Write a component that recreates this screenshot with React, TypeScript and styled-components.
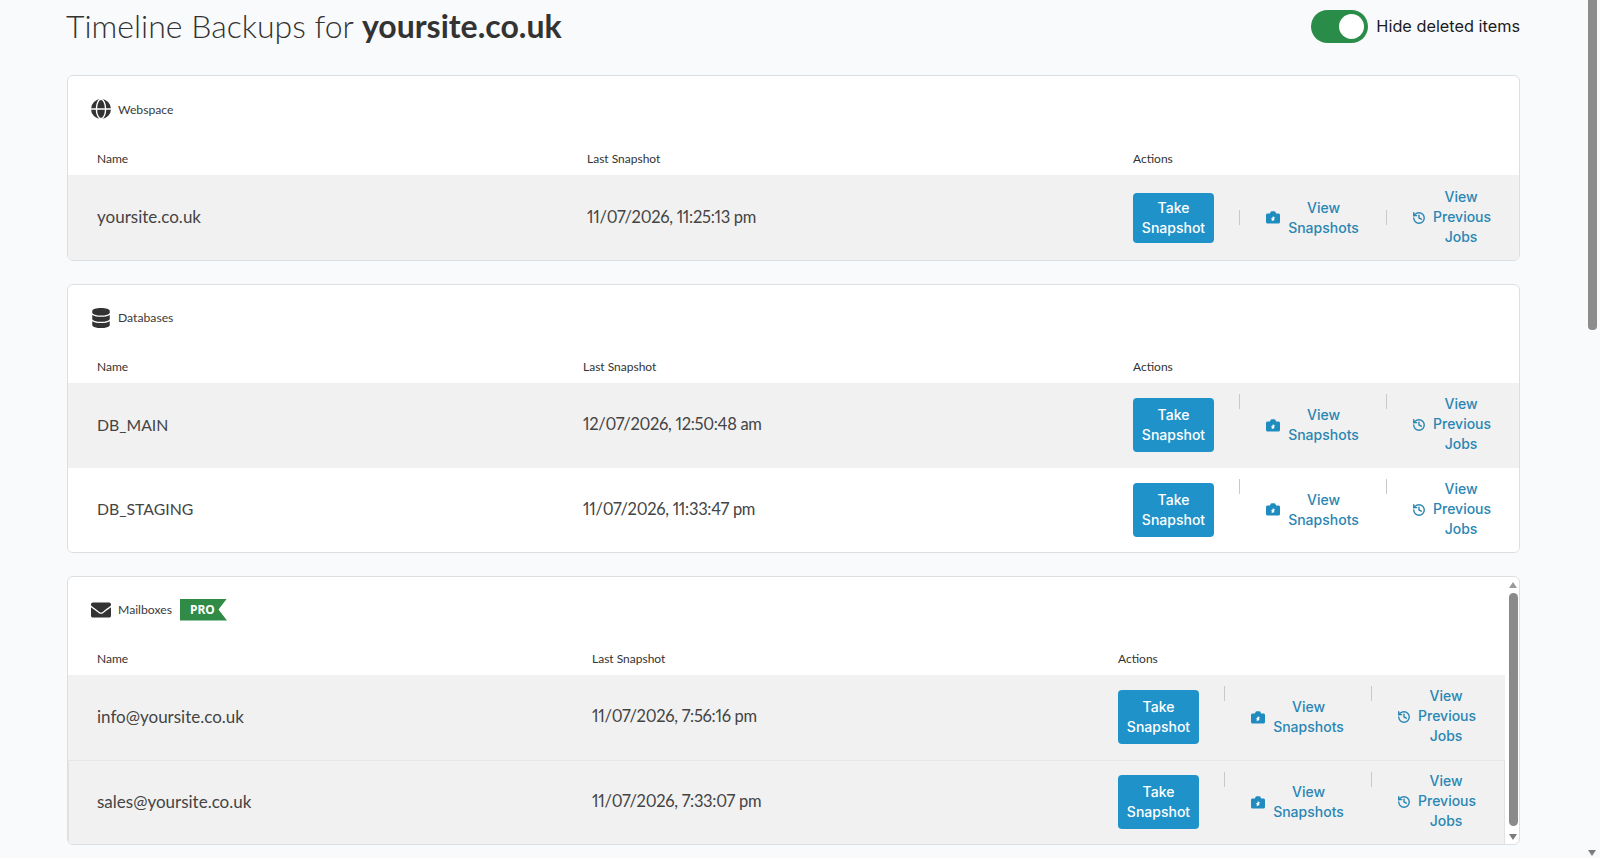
import React from 'react';
import styled, {createGlobalStyle} from 'styled-components';
import {History} from 'lucide-react';
import {FaDatabase, FaEnvelope} from 'react-icons/fa';

const GlobalStyle = createGlobalStyle`
  html, body {
    margin: 0;
    padding: 0;
    background: #f9fafc;
  }
`;

const Page = styled.div`
  display: flex;
  width: 1600px;
  height: 858px;
  overflow: hidden;
  background: #f9fafc;
  color: #333;
  font-family: Lato, "Noto Sans", sans-serif;
  box-sizing: border-box;
`;

const Content = styled.main`
  flex: 1;
  min-width: 0;
  padding: 0 68px 0 67px;
`;

const TopBar = styled.header`
  display: flex;
  justify-content: space-between;
  align-items: center;
  height: 52px;
  margin-bottom: 23px;
`;

const Title = styled.h1`
  margin: -2px 0 0 -1px;
  font-size: 32px;
  font-weight: 300;
  color: #333;

  b {
    font-weight: 700;
  }
`;

const ToggleWrap = styled.label`
  display: flex;
  align-items: center;
  gap: 8px;
  font-family: Inter, sans-serif;
  font-size: 16.3px;
  color: #1c1c1c;
`;

const Toggle = styled.span`
  display: flex;
  justify-content: flex-end;
  align-items: center;
  width: 57px;
  height: 33px;
  padding: 4px;
  border-radius: 17px;
  background: #2a8c49;
  box-sizing: border-box;

  &::after {
    content: "";
    width: 25px;
    height: 25px;
    border-radius: 50%;
    background: #fff;
  }
`;

const Card = styled.section`
  display: flex;
  margin-bottom: 23px;
  background: #fff;
  border: 1px solid #dcdfe2;
  border-radius: 6px;
  overflow: hidden;
  box-sizing: border-box;
`;

const CardMain = styled.div`
  flex: 1;
  min-width: 0;
`;

const CardTitle = styled.div<{$tall: boolean}>`
  display: flex;
  align-items: center;
  gap: 7px;
  height: ${(p) => (p.$tall ? `65px` : `66px`)};
  padding-left: 23px;
  font-size: 12.2px;
  color: #3a3a3a;

  svg {
    flex: none;
    width: 20px;
    height: 20px;
    color: #333;
  }
`;

const ProBadge = styled.span`
  display: flex;
  align-items: center;
  width: 47px;
  height: 22px;
  margin-left: 1px;
  padding-left: 10px;
  box-sizing: border-box;
  background: #2f8b45;
  color: #fff;
  font-family: "Noto Sans", sans-serif;
  font-size: 12px;
  font-weight: 700;
  clip-path: polygon(0 0, 100% 0, 82% 50%, 100% 100%, 0 100%);
`;

const Columns = styled.div<{$name: number; $last: number}>`
  display: grid;
  grid-template-columns: ${(p) => p.$name}px ${(p) => p.$last}px 1fr;
  align-items: center;
  padding-left: 29px;
`;

const HeadRow = styled(Columns)`
  height: 33px;
  font-size: 12px;
  color: #333;
`;

const Row = styled(Columns)<{$shaded: boolean; $divided?: boolean; $tall: boolean}>`
  height: ${(p) => (p.$tall ? `84.5px` : `85px`)};
  background: ${(p) => (p.$shaded ? `#f1f1f1` : `#fff`)};
  border-top: ${(p) => (p.$divided ? `1px solid #e6e6e6` : `none`)};
  box-shadow: ${(p) => (p.$divided ? `inset 1px 0 #e2e2e2, inset -1px 0 #e2e2e2` : `none`)};
  box-sizing: border-box;
  font-size: 17px;
  color: #444;
`;

const NameCell = styled.div<{$caps: boolean}>`
  padding-bottom: 2px;
  font-size: ${(p) => (p.$caps ? `15.8px` : `17px`)};
`;

const DateCell = styled.div`
  padding-bottom: 2px;
  font-size: 16.5px;
  font-variant-numeric: proportional-nums;
  letter-spacing: -0.3px;
`;

const Actions = styled.div`
  display: flex;
  align-items: center;
  height: 100%;
`;

const SnapshotButton = styled.button<{$tall: boolean}>`
  flex: none;
  width: 81px;
  height: ${(p) => (p.$tall ? `54px` : `50px`)};
  padding: 0;
  border: none;
  border-radius: 4px;
  background: #1f93c9;
  color: #fff;
  font-family: Inter, sans-serif;
  font-size: 14px;
  font-weight: 500;
  line-height: 20px;
`;

const Divider = styled.span<{$top: boolean}>`
  flex: none;
  width: 1px;
  height: 15px;
  background: #c9c9c9;
  align-self: ${(p) => (p.$top ? `flex-start` : `center`)};
  margin-top: ${(p) => (p.$top ? `11px` : `0`)};
`;

const ActionLink = styled.a<{$width: number; $gap: number}>`
  display: flex;
  flex: none;
  align-items: center;
  gap: ${(p) => p.$gap}px;
  color: #2a86b3;
  font-family: Inter, sans-serif;
  font-size: 14px;
  font-weight: 500;
  line-height: 20px;
  text-align: center;

  span {
    width: ${(p) => p.$width}px;
  }

  svg {
    flex: none;
  }
`;

const SnapshotsLink = styled(ActionLink)`
  margin: 0 27px 0 26px;
`;

const JobsLink = styled(ActionLink)`
  margin-left: 25px;

  span {
    padding-bottom: 2px;
  }
`;

const FirstGap = styled.span`
  flex: none;
  width: 25px;
`;

const PageScrollbar = styled.div`
  display: flex;
  flex: none;
  flex-direction: column;
  justify-content: space-between;
  width: 9px;
  height: 858px;
  margin-right: 3px;
  padding-bottom: 2px;
  box-sizing: border-box;
`;

const PageThumb = styled.div`
  height: 330px;
  border-radius: 0 0 4px 4px;
  background: #8c8c8c;
`;

const Arrow = styled.div<{$up?: boolean}>`
  flex: none;
  width: 0;
  height: 0;
  border-left: 4.5px solid transparent;
  border-right: 4.5px solid transparent;
  border-top: ${(p) => (p.$up ? `none` : `6px solid #7c7c7c`)};
  border-bottom: ${(p) => (p.$up ? `6px solid #9a9a9a` : `none`)};
`;

const InnerScrollbar = styled.div`
  display: flex;
  flex: none;
  flex-direction: column;
  width: 9px;
  margin: 0 1px 0 4px;
  padding-top: 5px;
  box-sizing: border-box;
`;

const InnerThumb = styled.div`
  height: 233px;
  margin: 5px 0 8px;
  border-radius: 5px;
  background: #8a8a8a;
`;

const GlobeIcon = () => (
  <svg viewBox="0 0 20 20">
    <circle cx="10" cy="10" r="10" fill="currentColor" />
    <ellipse cx="10" cy="10" rx="4.6" ry="9.6" fill="none" stroke="#fff" strokeWidth="1.4" />
    <path d="M0 10h20" stroke="#fff" strokeWidth="1.4" />
  </svg>
);

const CameraIcon = () => (
  <svg width="14" height="13" viewBox="0 0 14 13">
    <path
      d="M1.5 2.5h2.4L4.7.8C4.9.4 5.2.2 5.6.2h2.8c.4 0 .7.2.9.6l.8 1.7h2.4c.8 0 1.5.7 1.5 1.5v7c0 .8-.7 1.5-1.5 1.5h-11C.7 12.500 0 11.800 0 11V4c0-.8.7-1.500 1.500-1.500z"
      fill="#1f8cc0"
    />
    <path d="M7 4.800l.7 1.500 1.600.2-1.200 1.100.3 1.600L7 9.400l-1.400.8.3-1.600-1.200-1.100 1.600-.2z" fill="#fff" />
  </svg>
);

interface Item {
  name: string,
  date: string
}

interface GroupProps {
  title: string,
  icon: React.ReactNode,
  pro?: boolean,
  nameWidth: number,
  lastWidth: number,
  items: Item[],
  tall: boolean,
  caps?: boolean,
  stripeAll?: boolean,
  scroll?: boolean
}

const Group: React.FunctionComponent<GroupProps> = (props: GroupProps) => {
  const {title, icon, pro, nameWidth, lastWidth, items, tall, caps, stripeAll, scroll} = props;

  return (
    <Card>
      <CardMain>
        <CardTitle $tall={tall}>
          {icon}
          {title}
          {pro && <ProBadge>PRO</ProBadge>}
        </CardTitle>
        <HeadRow $name={nameWidth} $last={lastWidth}>
          <div>Name</div>
          <div>Last Snapshot</div>
          <div>Actions</div>
        </HeadRow>
        {items.map((item, i) => (
          <Row
            key={item.name}
            $name={nameWidth}
            $last={lastWidth}
            $tall={tall}
            $shaded={stripeAll || i === 0}
            $divided={stripeAll && i > 0}
          >
            <NameCell $caps={!!caps}>{item.name}</NameCell>
            <DateCell>{item.date}</DateCell>
            <Actions>
              <SnapshotButton $tall={tall}>Take Snapshot</SnapshotButton>
              <FirstGap />
              <Divider $top={tall} />
              <SnapshotsLink $width={71} $gap={8}>
                <CameraIcon />
                <span>View Snapshots</span>
              </SnapshotsLink>
              <Divider $top={tall} />
              <JobsLink $width={56} $gap={7}>
                <History size={14} strokeWidth={2.4} />
                <span>View Previous Jobs</span>
              </JobsLink>
            </Actions>
          </Row>
        ))}
      </CardMain>
      {scroll && (
        <InnerScrollbar>
          <Arrow $up />
          <InnerThumb />
          <Arrow />
        </InnerScrollbar>
      )}
    </Card>
  );
};

const App: React.FunctionComponent = () => (
  <Page>
    <GlobalStyle />
    <Content>
      <TopBar>
        <Title>Timeline Backups for <b>yoursite.co.uk</b></Title>
        <ToggleWrap>
          <Toggle />
          Hide deleted items
        </ToggleWrap>
      </TopBar>
      <Group
        title="Webspace"
        icon={<GlobeIcon />}
        nameWidth={490}
        lastWidth={546}
        tall={false}
        items={[{name: `yoursite.co.uk`, date: `11/07/2026, 11:25:13 pm`}]}
      />
      <Group
        title="Databases"
        icon={<FaDatabase />}
        nameWidth={486}
        lastWidth={550}
        tall
        caps
        items={[
          {name: `DB_MAIN`, date: `12/07/2026, 12:50:48 am`},
          {name: `DB_STAGING`, date: `11/07/2026, 11:33:47 pm`},
        ]}
      />
      <Group
        title="Mailboxes"
        icon={<FaEnvelope />}
        pro
        nameWidth={495}
        lastWidth={526}
        tall
        stripeAll
        scroll
        items={[
          {name: `info@yoursite.co.uk`, date: `11/07/2026, 7:56:16 pm`},
          {name: `sales@yoursite.co.uk`, date: `11/07/2026, 7:33:07 pm`},
        ]}
      />
    </Content>
    <PageScrollbar>
      <PageThumb />
      <Arrow />
    </PageScrollbar>
  </Page>
);

export default App;
